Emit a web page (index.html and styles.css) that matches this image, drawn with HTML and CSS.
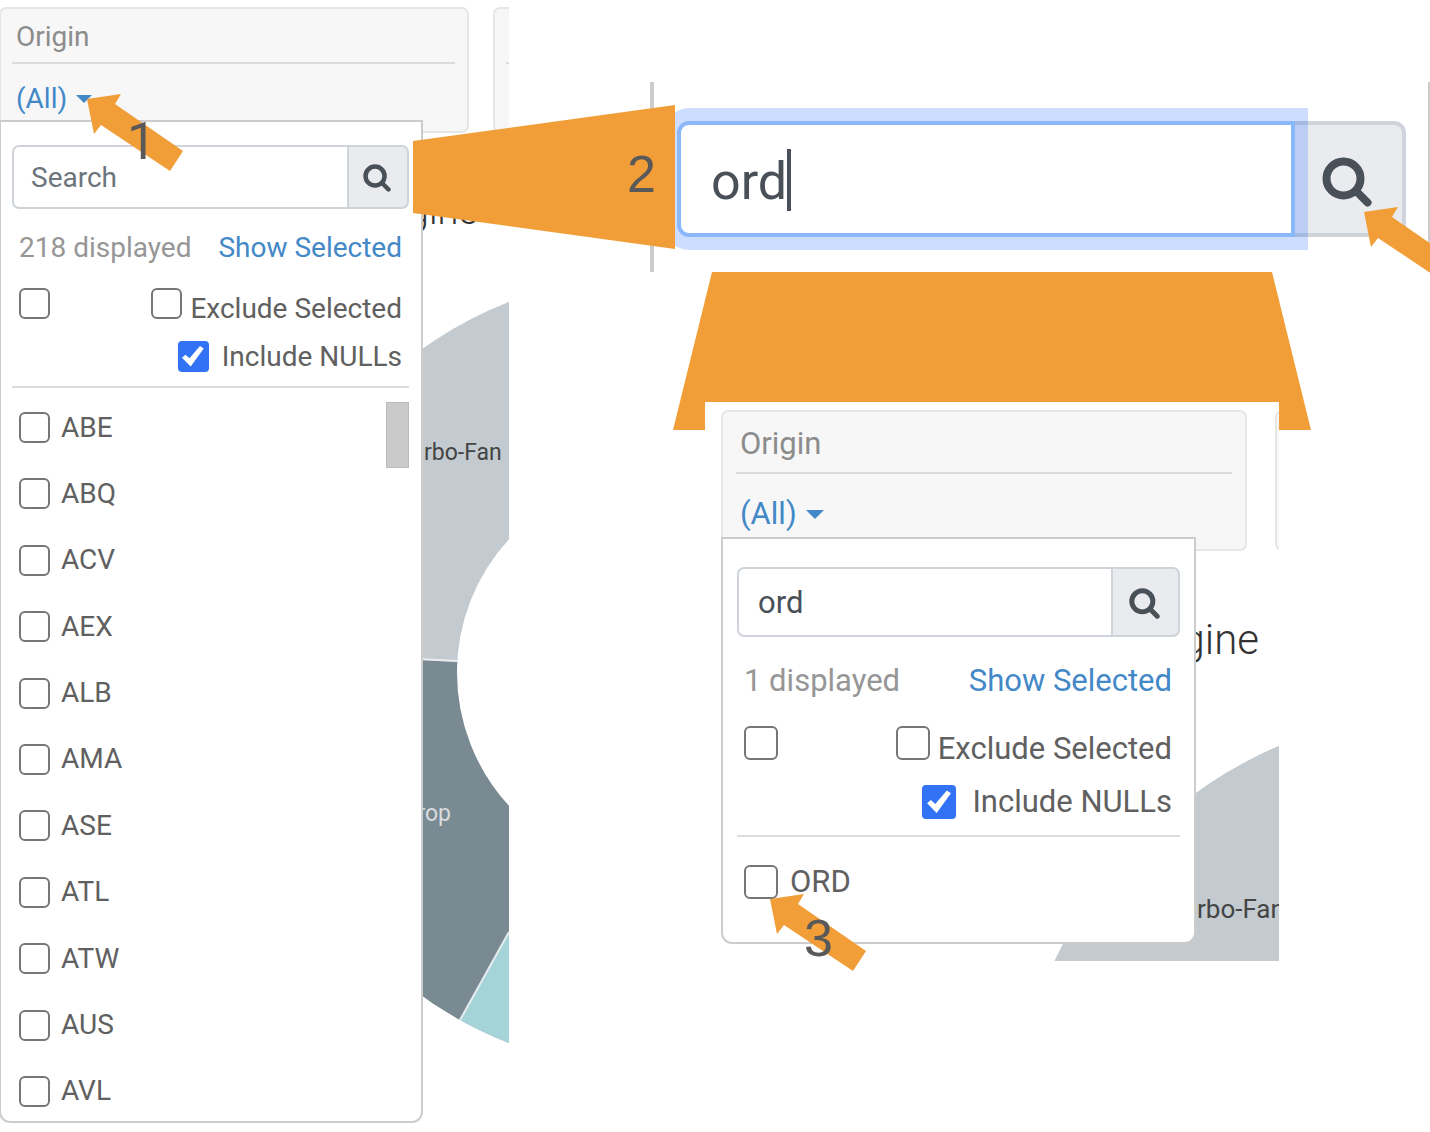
FILE: index.html
```html
<!DOCTYPE html>
<html lang="en">
<head>
<meta charset="utf-8">
<meta name="viewport" content="width=device-width, initial-scale=1">
<title>Filter by origin</title>
<link rel="stylesheet" href="styles.css">
</head>
<body>
<svg class="defs" aria-hidden="true">
  <symbol id="search" viewBox="0 0 50 50">
    <circle cx="21.5" cy="21.5" r="17" fill="none" stroke="currentColor" stroke-width="8"/>
    <path d="M34 34 45.500 45.500" fill="none" stroke="currentColor" stroke-width="8" stroke-linecap="round"/>
  </symbol>
  <symbol id="arrow" viewBox="0 0 96 77">
    <path d="M0 5 34 0 28 10 96 57 83 77 14 31 7 40Z" fill="currentColor"/>
  </symbol>
</svg>
<main class="board">
  <section class="capture capture-list">
    <svg class="chart" width="509" height="1132" viewBox="0 0 509 1132" aria-hidden="true">
      <circle cx="654" cy="672.5" r="297.500" fill="none" stroke="#c3cbd0" stroke-width="201"/>
      <path d="M654 672.500 200 650 200 1132 397 1132Z" fill="#fff"/>
      <clipPath id="dark"><path d="M654 672.500 200 648 200 1132 397 1132Z"/></clipPath>
      <clipPath id="teal"><path d="M654 672.500 397 1132H654Z"/></clipPath>
      <circle cx="654" cy="672.5" r="297.500" fill="none" stroke="#798a93" stroke-width="201" clip-path="url(#dark)"/>
      <circle cx="654" cy="672.5" r="297.500" fill="none" stroke="#a4d3d8" stroke-width="201" clip-path="url(#teal)"/>
      <path d="M458 661 200 648M509 932 460 1020" stroke="#e8ecee" stroke-width="2"/>
      <text class="chart-title" x="478" y="224" text-anchor="end" font-size="38">gine</text>
      <text class="chart-label" x="424" y="460" font-size="23">rbo-Fan</text>
      <text class="chart-label chart-label-light" x="451" y="821" text-anchor="end" font-size="23">rop</text>
    </svg>
    <div class="filters">
      <div class="card">
        <div class="card-title">Origin</div>
        <button class="card-value" type="button">(All)<span class="caret"></span></button>
      </div>
      <div class="card"><div class="card-title"></div></div>
    </div>
    <div class="menu">
      <div class="search">
        <input class="search-text" type="text" placeholder="Search" aria-label="Search origins">
        <button class="search-button" type="button" aria-label="Search"><svg class="search-icon"><use href="#search"/></svg></button>
      </div>
      <div class="summary"><span class="count">218 displayed</span><a class="link" href="#selected">Show Selected</a></div>
      <div class="options">
        <input class="check" type="checkbox" aria-label="Select all">
        <label class="option option-exclude"><input class="check" type="checkbox"><span class="option-text">Exclude Selected</span></label>
      </div>
      <label class="option option-nulls"><input class="check" type="checkbox" checked><span>Include NULLs</span></label>
      <hr class="rule">
      <div class="list">
        <label class="item"><input class="check" type="checkbox"><span>ABE</span></label>
        <label class="item"><input class="check" type="checkbox"><span>ABQ</span></label>
        <label class="item"><input class="check" type="checkbox"><span>ACV</span></label>
        <label class="item"><input class="check" type="checkbox"><span>AEX</span></label>
        <label class="item"><input class="check" type="checkbox"><span>ALB</span></label>
        <label class="item"><input class="check" type="checkbox"><span>AMA</span></label>
        <label class="item"><input class="check" type="checkbox"><span>ASE</span></label>
        <label class="item"><input class="check" type="checkbox"><span>ATL</span></label>
        <label class="item"><input class="check" type="checkbox"><span>ATW</span></label>
        <label class="item"><input class="check" type="checkbox"><span>AUS</span></label>
        <label class="item"><input class="check" type="checkbox"><span>AVL</span></label>
        <span class="thumb"></span>
      </div>
    </div>
  </section>

  <div class="steps">
    <section class="closeup">
      <div class="search search-focus">
        <input class="search-text" type="text" value="ord" aria-label="Search origins">
        <span class="cursor"></span>
        <button class="search-button" type="button" aria-label="Search"><svg class="search-icon"><use href="#search"/></svg></button>
      </div>
    </section>

    <section class="capture capture-result">
      <svg class="chart" width="574" height="559" viewBox="705 402 574 559" aria-hidden="true">
        <circle cx="1456" cy="1155" r="446" fill="#c3cbd0"/>
        <text class="chart-title" x="1259" y="654" text-anchor="end" font-size="42">gine</text>
        <text class="chart-label" x="1197" y="918" font-size="26">rbo-Fan</text>
      </svg>
      <div class="filters">
        <div class="card">
          <div class="card-title">Origin</div>
          <button class="card-value" type="button">(All)<span class="caret"></span></button>
        </div>
        <div class="card"><div class="card-title"></div></div>
      </div>
      <div class="menu">
        <div class="search">
          <input class="search-text" type="text" value="ord" aria-label="Search origins">
          <button class="search-button" type="button" aria-label="Search"><svg class="search-icon"><use href="#search"/></svg></button>
        </div>
        <div class="summary"><span class="count">1 displayed</span><a class="link" href="#selected">Show Selected</a></div>
        <div class="options">
          <input class="check" type="checkbox" aria-label="Select all">
          <label class="option option-exclude"><input class="check" type="checkbox"><span class="option-text">Exclude Selected</span></label>
        </div>
        <label class="option option-nulls"><input class="check" type="checkbox" checked><span>Include NULLs</span></label>
        <hr class="rule">
        <div class="list">
          <label class="item"><input class="check" type="checkbox"><span>ORD</span></label>
        </div>
      </div>
    </section>
  </div>

  <svg class="funnel funnel-right" width="262" height="144" aria-hidden="true"><path d="M0 36 262 0V144L0 108Z" fill="currentColor"/></svg>
  <svg class="funnel funnel-down" width="638" height="158" aria-hidden="true"><path d="M39 0H599L638 158H0Z" fill="currentColor"/></svg>
  <svg class="arrow arrow-one"><use href="#arrow"/></svg>
  <svg class="arrow arrow-two"><use href="#arrow"/></svg>
  <svg class="arrow arrow-three"><use href="#arrow"/></svg>
  <span class="number number-one">1</span>
  <span class="number number-two">2</span>
  <span class="number number-three">3</span>
</main>
</body>
</html>
```
FILE: styles.css
```css
* { box-sizing: border-box; }

body {
  margin: 0;
  background: #fff;
  color: #606060;
  font-family: Roboto, "Liberation Sans", sans-serif;
}

.defs { position: absolute; width: 0; height: 0; }

.board {
  position: relative;
  display: grid;
  grid-template-columns: 509px minmax(0, 1fr);
  overflow: hidden;
}

/* One copy of the filter panel; the variables set its zoom level */
.capture {
  position: relative;
  overflow: hidden;
  font-size: var(--text);
  line-height: var(--line);
}

.capture-list {
  --text: 28px;
  --line: 32px;
  --box: 31px;
  --field: 64px;
  --button: 62px;
  --icon: 28px;
  --inset: 12px;
  --field-pad: 17px;
  padding: 7px 0 10px;
}

.capture-result {
  --text: 31px;
  --line: 36px;
  --box: 34px;
  --field: 70px;
  --button: 69px;
  --icon: 31px;
  --inset: 14px;
  --field-pad: 19px;
  width: 574px;
  margin: 130px 0 0 196px;
  padding: 8px 0 18px 16px;
  background: #fff;
  z-index: 2;
}

.chart { position: absolute; top: 0; left: 0; }
.chart-title { fill: #333; font-weight: 300; }
.chart-label { fill: #444; }
.chart-label-light { fill: #d8dcde; }

.filters { position: relative; display: flex; gap: 24px; }
.capture-list .filters, .capture-list .menu { margin-left: -1px; }
.capture-result .filters { gap: 28px; }

.card {
  flex: none;
  width: 470px;
  height: 126px;
  padding: 12px 12px 12px 11px;
  border: 2px solid #e6e6e6;
  border-radius: 7px;
  background: #f7f7f7;
}
.capture-result .card { width: 526px; height: 141px; padding: 14px 13px; }

.card-title {
  height: 43px;
  padding-left: 4px;
  border-bottom: 2px solid #dcdcdc;
  color: #8c8c8c;
}
.capture-result .card-title { height: 48px; }

.card-value {
  display: flex;
  align-items: center;
  gap: 9px;
  margin-top: 19px;
  padding: 0 0 0 4px;
  border: 0;
  background: none;
  color: #4388c7;
  font: inherit;
}
.capture-result .card-value { margin-top: 22px; }

.caret {
  border: 8px solid transparent;
  border-top-color: currentColor;
  border-bottom: 0;
}
.capture-result .caret { border-width: 9px 9px 0; }

.menu {
  position: relative;
  width: 424px;
  margin-top: -13px;
  padding: 23px 12px 14px 11px;
  border: 2px solid #ccc;
  border-radius: 0 0 11px 11px;
  background: #fff;
}
.capture-result .menu { width: 475px; margin-top: -14px; padding: 28px var(--inset) 43px; }

.search { display: flex; height: var(--field); }

.search-text {
  flex: 1;
  min-width: 0;
  padding: 2px var(--field-pad) 0;
  border: 2px solid #ced4da;
  border-right: 0;
  border-radius: 7px 0 0 7px;
  background: #fff;
  color: #495057;
  font: inherit;
}
.search-text::placeholder { color: #6c757d; opacity: 1; }

.search-button {
  display: flex;
  align-items: center;
  justify-content: center;
  width: var(--button);
  padding: 2px 3px 0 0;
  border: 2px solid #ced4da;
  border-radius: 0 7px 7px 0;
  background: #e9ebef;
  color: #495057;
}

.search-icon { width: var(--icon); height: var(--icon); }

.summary {
  display: flex;
  justify-content: space-between;
  margin-top: 23px;
  padding: 0 7px;
}
.capture-result .summary { margin-top: 26px; padding: 0 8px 0 7px; }
.count { color: #969696; }
.link { color: #4388c7; text-decoration: none; }

.options {
  display: flex;
  align-items: flex-start;
  justify-content: space-between;
  margin-top: 24px;
  padding: 0 7px;
}
.capture-result .options { margin-top: 27px; padding: 0 8px 0 7px; }

.option { display: flex; align-items: center; gap: 13px; }
.capture-result .option { gap: 16px; }
.option-exclude, .capture-result .option-exclude { align-items: flex-start; gap: 8px; }
.option-text { padding-top: 5px; }

.option-nulls {
  justify-content: flex-end;
  height: var(--box);
  margin-top: 16px;
  padding-right: 7px;
}
.capture-result .option-nulls { margin-top: 18px; padding-right: 8px; }

.check {
  appearance: none;
  flex: none;
  width: var(--box);
  height: var(--box);
  margin: 0;
  border: 2px solid #767676;
  border-radius: 6px;
  background: #fff;
}
.check:checked { border: 0; border-radius: 4px; background: #3273f6; }
.check:checked::before {
  content: "";
  display: block;
  height: 100%;
  background: #fff;
  clip-path: polygon(14% 54%, 25% 44%, 38% 56%, 72% 16%, 84% 24%, 42% 82%);
}

.rule { margin: 14px 0 0; border: 0; border-top: 2px solid #dcdcdc; }
.capture-result .rule { margin-top: 16px; }

.list {
  position: relative;
  display: flex;
  flex-direction: column;
  justify-content: space-between;
  min-height: 695px;
  margin-top: 24px;
  padding-left: 7px;
}
.capture-result .list { min-height: 0; margin-top: 28px; }

.item { display: flex; align-items: center; gap: 11px; height: var(--box); line-height: 28px; }
.capture-result .item { gap: 12px; }

.thumb {
  position: absolute;
  top: -10px;
  right: 0;
  width: 23px;
  height: 66px;
  border: 1px solid #bbb;
  background: #cacaca;
}

/* Enlarged search field */
.closeup {
  --button: 111px;
  --icon: 50px;
  --field: 116px;
  --field-pad: 30px;
  margin: 82px 0 0 141px;
  padding: 39px 22px 35px 23px;
  border-left: 4px solid #ccc;
  border-right: 2px solid #ccc;
  font-size: 52px;
}
.search-focus { position: relative; }
.search-focus .search-text {
  position: relative;
  z-index: 1;
  padding-top: 4px;
  border: 4px solid #8bb8fb;
  border-radius: 12px 0 0 12px;
  box-shadow: 0 0 0 13px rgba(5, 85, 255, 0.2);
}
.search-focus .search-button {
  padding: 6px 4px 0 0;
  border: 4px solid #ced4d9;
  border-left: 0;
  border-radius: 0 12px 12px 0;
}
.cursor {
  position: absolute;
  top: 28px;
  left: 110px;
  z-index: 2;
  width: 4px;
  height: 62px;
  background: #495057;
}

/* Annotations laid over the captures */
.funnel, .arrow { position: absolute; color: #f19e38; }
.funnel-right { top: 105px; left: 413px; z-index: 3; }
.funnel-down { top: 272px; left: 673px; }
.arrow { z-index: 3; width: 96px; height: 77px; }
.arrow-one { top: 94px; left: 87px; }
.arrow-two { top: 207px; left: 1364px; }
.arrow-three { top: 894px; left: 770px; }

.number {
  position: absolute;
  z-index: 4;
  color: #595959;
  font: 52px/60px "Liberation Sans", sans-serif;
}
.number-one { top: 112px; left: 127px; font-family: Roboto, sans-serif; }
.number-two { top: 144px; left: 627px; }
.number-three { top: 908px; left: 804px; }
```
